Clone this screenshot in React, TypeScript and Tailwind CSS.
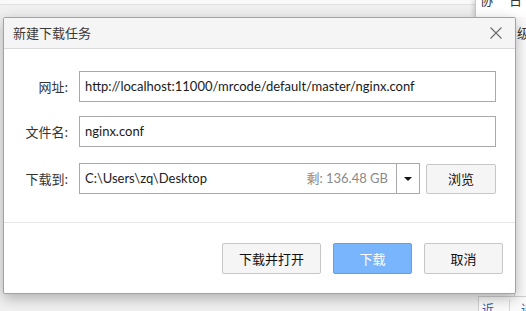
const cjk = "font-['Microsoft_YaHei','Noto_Sans_CJK_SC',sans-serif]";
const latin = "font-['Segoe_UI','Lato','Noto_Sans_CJK_SC',sans-serif]";

function Label({ text }: { text: string }) {
  return (
    <div className={`w-[64px] shrink-0 text-right text-[13px] text-[#333] ${cjk}`}>{text}</div>
  );
}

export default function App() {
  return (
    <div className="relative w-[526px] h-[311px] overflow-hidden bg-[#f0f0f0]">
      {/* desktop behind the dialog */}
      <div className="absolute left-0 top-0 w-full h-[5px] bg-[#f9f9f9] border-b border-[#e2e2e2]" />
      <div className="absolute left-[475px] top-0 w-[51px] h-[17px] bg-white border-l border-[#c8c8c8] shadow-[-2px_0_4px_rgba(0,0,0,0.15)] overflow-hidden">
        <span className={`absolute left-[4px] top-[-10px] text-[13px] text-[#333] ${cjk}`}>协</span>
        <span className={`absolute left-[33px] top-[-10px] text-[13px] text-[#333] ${cjk}`}>日</span>
      </div>
      <div className="absolute left-[514px] top-[17px] w-[12px] h-[280px] bg-[#fafafa] border-l border-[#cfcfcf] overflow-hidden">
        <span className={`absolute left-[2px] top-[6px] text-[13px] text-[#333] ${cjk}`}>级</span>
      </div>
      <div className="absolute left-[478px] top-[296px] w-[48px] h-[15px] bg-[#fafafa] border-l border-t border-[#cfcfcf] overflow-hidden">
        <span className={`absolute left-[3px] top-[3px] text-[12px] text-[#2b5aa8] ${cjk}`}>近</span>
        <div className="absolute left-[30px] top-[3px] w-px h-[12px] bg-[#d8d8d8]" />
        <span className={`absolute left-[42px] top-[3px] text-[12px] text-[#2b5aa8] ${cjk}`}>近</span>
      </div>

      {/* dialog */}
      <div className="absolute left-[3px] top-[17px] w-[513px] h-[277px] flex flex-col bg-white border border-[#a3a3a3] rounded-[2px] shadow-[0_4px_14px_rgba(0,0,0,0.28)]">
        <div className="h-[31px] shrink-0 flex items-center justify-between pl-[9px] pr-[13px] bg-[#f5f5f5] border-b border-[#dadada]">
          <span className={`text-[13px] text-[#3a3a3a] ${cjk}`}>新建下载任务</span>
          <svg width="12" height="12" viewBox="0 0 12 12" className="text-[#6a6a6a]">
            <path d="M0.5 0.5 L11.5 11.5 M11.5 0.5 L0.5 11.5" stroke="currentColor" strokeWidth="1.1" fill="none" />
          </svg>
        </div>

        <div className="flex flex-col pt-[22px] pb-[28px] border-b border-[#e6e6e6]">
          <div className="flex items-center gap-[11px]">
            <Label text="网址:" />
            <div className={`w-[417px] h-[31px] flex items-center px-[5px] border border-[#a9a9a9] text-[13px] text-[#1a1a1a] ${latin}`}>
              http://localhost:11000/mrcode/default/master/nginx.conf
            </div>
          </div>
          <div className="flex items-center gap-[11px] mt-[14px]">
            <Label text="文件名:" />
            <div className={`w-[417px] h-[31px] flex items-center px-[5px] border border-[#a9a9a9] text-[13px] text-[#1a1a1a] ${latin}`}>
              nginx.conf
            </div>
          </div>
          <div className="flex items-center gap-[11px] mt-[16px]">
            <Label text="下载到:" />
            <div className="flex items-center gap-[6px]">
              <div className="w-[341px] h-[31px] flex border border-[#a9a9a9]">
                <div className={`flex-1 flex items-center justify-between pl-[5px] pr-[8px] text-[13px] ${latin}`}>
                  <span className="text-[#222]">C:\Users\zq\Desktop</span>
                  <span className="text-[#8a8a8a]">剩: 136.48 GB</span>
                </div>
                <div className="w-[23px] flex items-center justify-center border-l border-[#a9a9a9]">
                  <div className="w-0 h-0 border-l-[4px] border-r-[4px] border-t-[4px] border-l-transparent border-r-transparent border-t-[#111]" />
                </div>
              </div>
              <button className={`w-[70px] h-[30px] bg-[#f5f5f5] border border-[#c6c6c6] rounded-[2px] text-[13px] text-[#111] ${cjk}`}>
                浏览
              </button>
            </div>
          </div>
        </div>

        <div className="flex justify-end gap-[12px] pt-[20px] pr-[12px]">
          <button className={`w-[99px] h-[31px] bg-[#f5f5f5] border border-[#c6c6c6] rounded-[2px] text-[13px] text-[#111] ${cjk}`}>
            下载并打开
          </button>
          <button className={`w-[79px] h-[31px] bg-[#79b5fd] border border-[#5c9ef0] rounded-[2px] text-[13px] text-white ${cjk}`}>
            下载
          </button>
          <button className={`w-[79px] h-[31px] bg-[#f5f5f5] border border-[#c6c6c6] rounded-[2px] text-[13px] text-[#111] ${cjk}`}>
            取消
          </button>
        </div>
      </div>
    </div>
  );
}
